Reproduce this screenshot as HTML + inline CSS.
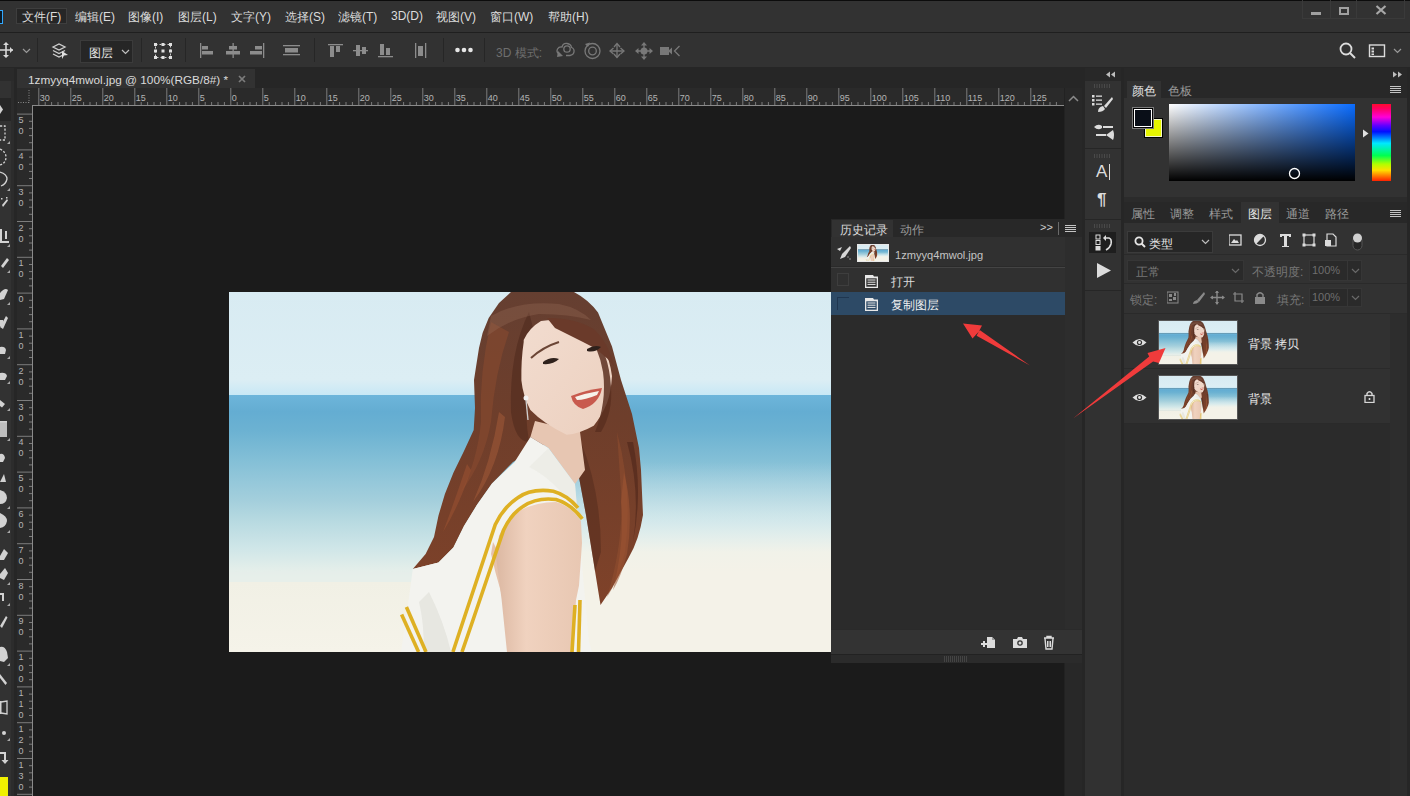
<!DOCTYPE html>
<html><head><meta charset="utf-8">
<style>
*{margin:0;padding:0;box-sizing:border-box}
html,body{width:1410px;height:796px;overflow:hidden;background:#282828;font-family:"Liberation Sans",sans-serif;color:#d6d6d6}
.a{position:absolute}
.t{position:absolute;white-space:nowrap;line-height:1}
svg{display:block;position:absolute}
i{font-style:normal;display:inline-block}
</style></head><body>
<svg width="0" height="0" style="position:absolute">
<symbol id="photo" viewBox="0 0 648 360" preserveAspectRatio="none">
 <defs>
  <linearGradient id="sky" x1="0" y1="0" x2="0" y2="1">
   <stop offset="0" stop-color="#d8ebf2"/>
   <stop offset="0.85" stop-color="#dceef4"/>
   <stop offset="1" stop-color="#c8e8f5"/>
  </linearGradient>
  <linearGradient id="sea" x1="0" y1="0" x2="0" y2="1">
   <stop offset="0" stop-color="#6db5da"/>
   <stop offset="0.09" stop-color="#64add2"/>
   <stop offset="0.19" stop-color="#6cb2d2"/>
   <stop offset="0.33" stop-color="#81bed6"/>
   <stop offset="0.46" stop-color="#95c8da"/>
   <stop offset="0.56" stop-color="#a4cfdc"/>
   <stop offset="0.67" stop-color="#b8dae1"/>
   <stop offset="0.81" stop-color="#cfe6e8"/>
   <stop offset="0.92" stop-color="#e3eeea"/>
   <stop offset="1" stop-color="#eef2ea"/>
  </linearGradient>
  <linearGradient id="sand" x1="0" y1="0" x2="0" y2="1">
   <stop offset="0" stop-color="#f1f0e5"/>
   <stop offset="1" stop-color="#f5f3e9"/>
  </linearGradient>
  <linearGradient id="hairg" x1="0" y1="0" x2="0" y2="1">
   <stop offset="0" stop-color="#653f31"/>
   <stop offset="0.4" stop-color="#6e3e2b"/>
   <stop offset="1" stop-color="#7f4229"/>
  </linearGradient>
  <linearGradient id="armg" x1="0" y1="0" x2="1" y2="0">
   <stop offset="0" stop-color="#dcb8a2"/>
   <stop offset="0.35" stop-color="#f0d2bf"/>
   <stop offset="1" stop-color="#e8c7b2"/>
  </linearGradient>
  <linearGradient id="faceg" x1="0" y1="0" x2="1" y2="1">
   <stop offset="0" stop-color="#f2dccf"/>
   <stop offset="1" stop-color="#ecd0bf"/>
  </linearGradient>
 </defs>
 <rect x="0" y="0" width="648" height="103" fill="url(#sky)"/>
 <rect x="0" y="103" width="648" height="189" fill="url(#sea)"/>
 <rect x="0" y="290" width="648" height="70" fill="url(#sand)"/>
 <path d="M0 280 Q120 276 240 282 L240 290 L0 290Z" fill="#e6eeea" opacity="0.7"/>
 <linearGradient id="beachR" gradientUnits="userSpaceOnUse" x1="0" y1="170" x2="0" y2="280"><stop offset="0" stop-color="#d6ebf0" stop-opacity="0"/><stop offset="0.55" stop-color="#e0eff0" stop-opacity="0.7"/><stop offset="0.82" stop-color="#f1f2e9"/><stop offset="1" stop-color="#f4f2e8"/></linearGradient>
 <rect x="300" y="170" width="348" height="190" fill="url(#beachR)"/>
 <!-- hair -->
 <path fill="url(#hairg)" d="M282 0 L345 0 Q360 8 369 20.6 L383 54.5 L392 88 L403 122 L410 156 L412 178 L414 223 Q410 248 400 265 L383 296 L371.5 313 L366 279 L357 223 L349 180 L345 160 L320 150 L284 170 L263 191.4 L248 212.8 L235 234 L224.4 255.5 L209.5 270.5 L183.8 277 L196.6 262 L205 245 L209.5 223.5 L215.9 202 L224.4 180.7 L235 159 L244.7 138 L246 116 L245 88 L247 75 L250 56 L253.6 41 L259.7 26 L270 11 L282 0Z"/>
 <!-- hair highlights / shadows -->
 <path fill="#8a4a30" opacity="0.55" d="M262 30 Q250 80 252 130 Q248 170 232 200 Q255 170 262 130 Q266 80 280 40Z"/>
 <path fill="#4a2619" opacity="0.5" d="M300 20 Q280 60 282 120 Q286 150 300 150 Q292 100 305 40Z"/>
 <path fill="#93502f" opacity="0.5" d="M388 140 Q404 200 396 260 Q388 290 378 305 Q395 250 392 200Z"/>
 <path fill="#4d271b" opacity="0.45" d="M352 150 Q372 200 372 260 L366 279 L357 223 L349 180Z"/>
 <g opacity="0.55">
  <path fill="#9c5232" d="M238 172 Q226 208 214 240 Q230 214 242 178Z"/>
  <path fill="#a05634" d="M395 180 Q405 220 398 262 Q392 285 384 298 Q396 250 392 210Z"/>
  <path fill="#4a2318" d="M404 150 Q414 200 404 250 Q412 200 398 150Z"/>
  <path fill="#a25a38" d="M270 120 Q262 170 244 210 Q270 175 276 125Z"/>
 </g>
 <path fill="#9a705e" opacity="0.3" d="M262 24 Q290 8 330 12 Q350 16 362 28 Q340 22 310 22 Q282 26 258 44Z"/>
 <!-- neck -->
 <path fill="#e7c6b2" d="M306 129 L351 140 L356 178 L346 192 L319.5 156 L301.4 145Z"/>
 <!-- face -->
 <path fill="url(#faceg)" d="M294.7 48 Q300 36 312 29 Q332 26 352 32 Q366 40 373.8 54.5 Q381 68 383 84 Q382 100 378 111 Q372 125 364.7 133.7 Q350 142 337.6 142.7 Q315 132 301.4 118 Q294 104 292.4 88.4 Q292 68 294.7 50Z"/>
 <!-- strands over face -->
 <path fill="#5a2f20" opacity="0.85" d="M362 38 Q380 60 382 95 Q384 120 372 140 L366 140 Q378 110 374 80 Q370 55 356 40Z"/>
 <path fill="#6a3a2a" d="M318 26 Q348 26 366 38 Q380 52 385 74 Q372 58 354 50 Q338 42 326 36Z"/>
 <path d="M302 66 Q314 55 330 50" stroke="#6b4535" stroke-width="2" fill="none"/>
 <!-- eyes / nose / lips -->
 <path d="M314 70 Q322 64 330 67 Q324 73 314 72Z" fill="#2f211c"/>
 <path d="M358 57 Q366 52 372 55 Q366 61 358 59Z" fill="#2f211c"/>
 <path d="M342 104 Q357 98 373 96 Q370 112 354 117 Q344 114 342 104Z" fill="#c85a4e"/>
 <path d="M346 105 Q358 101 370 99 L368 103 Q356 108 348 108Z" fill="#f6f1ea"/>
 <circle cx="297" cy="106" r="2.5" fill="#f2f2f2"/>
 <path d="M297 108 L299 128" stroke="#cfcfcf" stroke-width="1.3"/>
 <!-- dress -->
 <path fill="#f3f3ef" d="M285.6 170 L301.4 145 L319.5 156 L346 192 L351 251 L360 350 L363 360 L172 360 L178 320 L183.8 277 L209.5 270.5 L224.4 255.5 L235 234 L248 212.8 L263 191.4Z"/>
 <path fill="#dddcd5" opacity="0.55" d="M200 300 Q215 330 222 360 L195 360 Q195 330 190 310Z"/>
 <path fill="#e2e1da" opacity="0.35" d="M319.5 156 L346 192 L349 225 Q330 190 300 175Z"/>
 <!-- torso skin in armhole -->
 <path fill="#e5c2ab" d="M264 250 Q270 262 281 282 L272 300 Q266 280 262 262Z"/>
 <!-- arm -->
 <path fill="url(#armg)" d="M270 244 Q278 226 292 218 Q308 210 327 210 Q342 214 352 229 L353 251 L350 293.5 L347 308 L344 360 L278 360 L272.6 307.6 L267 265Z"/>
 <!-- yellow stripes -->
 <g fill="none" stroke="#deb023" stroke-width="3.6">
  <path d="M353.3 226.8 Q342 212 327 207.5 Q308 205 294 214.4 Q282 222 274.6 238 L244 328 L233 360"/>
  <path d="M349 215.8 Q338 203 324.3 199.2 Q302 196 288.4 206 Q274 216 266.3 232.4 L234.5 328 L223.9 360"/>
  <path d="M172.6 322.6 L189.6 360"/>
  <path d="M177.4 315 L197 360"/>
  <path d="M346 313 L343 360"/>
  <path d="M351 308 L349.5 360"/>
 </g>
</symbol>
</svg>

<div class="a" style="left:0px;top:0px;width:1410px;height:32px;background:#323232;"></div>
<div class="a" style="left:0px;top:0px;width:1410px;height:1px;background:#0c0c0c;"></div>
<div class="a" style="left:0px;top:32px;width:1410px;height:1px;background:#1f1f1f;"></div>
<div class="a" style="left:0px;top:10px;width:3px;height:14px;background:#0b1a26;border:1px solid #31a8ff;border-left:none"></div>
<div class="a" style="left:16px;top:8px;width:51px;height:16px;background:#262626;border:1px solid #3e3e3e"></div>
<span class="t" style="left:22px;top:11px;font-size:12px;color:#dcdcdc;"><i style="width:24.0px">文件</i>(F)</span>
<span class="t" style="left:75px;top:11px;font-size:12px;color:#dcdcdc;"><i style="width:24.0px">编辑</i>(E)</span>
<span class="t" style="left:128px;top:11px;font-size:12px;color:#dcdcdc;"><i style="width:24.0px">图像</i>(I)</span>
<span class="t" style="left:178px;top:11px;font-size:12px;color:#dcdcdc;"><i style="width:24.0px">图层</i>(L)</span>
<span class="t" style="left:231px;top:11px;font-size:12px;color:#dcdcdc;"><i style="width:24.0px">文字</i>(Y)</span>
<span class="t" style="left:285px;top:11px;font-size:12px;color:#dcdcdc;"><i style="width:24.0px">选择</i>(S)</span>
<span class="t" style="left:338px;top:11px;font-size:12px;color:#dcdcdc;"><i style="width:24.0px">滤镜</i>(T)</span>
<span class="t" style="left:391px;top:10px;font-size:12px;color:#dcdcdc;">3D(D)</span>
<span class="t" style="left:436px;top:11px;font-size:12px;color:#dcdcdc;"><i style="width:24.0px">视图</i>(V)</span>
<span class="t" style="left:490px;top:11px;font-size:12px;color:#dcdcdc;"><i style="width:24.0px">窗口</i>(W)</span>
<span class="t" style="left:548px;top:11px;font-size:12px;color:#dcdcdc;"><i style="width:24.0px">帮助</i>(H)</span>
<div class="a" style="left:1302px;top:0px;width:1px;height:19px;background:#3a3a3a;"></div>
<div class="a" style="left:1330px;top:0px;width:1px;height:19px;background:#3a3a3a;"></div>
<div class="a" style="left:1356px;top:0px;width:1px;height:19px;background:#3a3a3a;"></div>
<div class="a" style="left:1404px;top:0px;width:1px;height:19px;background:#3a3a3a;"></div>
<div class="a" style="left:1302px;top:18px;width:103px;height:1px;background:#3a3a3a;"></div>
<div class="a" style="left:1311px;top:12px;width:10px;height:3px;background:#a0a0a0;"></div>
<div class="a" style="left:1339px;top:7px;width:10px;height:8px;background:transparent;border:2px solid #a0a0a0;border-top-width:2.5px"></div>
<svg style="left:1375px;top:5px" width="12" height="10"><path d="M1.5 1L10.5 9M10.5 1L1.5 9" stroke="#a8a8a8" stroke-width="2.2"/></svg>
<div class="a" style="left:0px;top:33px;width:1410px;height:35px;background:#323232;"></div>
<svg style="left:0;top:42px" width="14" height="16"><path d="M6 1V15M0 8H13" stroke="#d8d8d8" stroke-width="1.6"/><path d="M6 0L3 3H9ZM6 16L3 13H9ZM13 8L10 5V11Z" fill="#d8d8d8"/></svg>
<svg style="left:22px;top:48px" width="9" height="6"><path d="M1 1L4.5 4.5L8 1" stroke="#9a9a9a" stroke-width="1.2" fill="none"/></svg>
<div class="a" style="left:37px;top:38px;width:1px;height:24px;background:#262626;"></div>
<div class="a" style="left:141px;top:38px;width:1px;height:24px;background:#262626;"></div>
<div class="a" style="left:185px;top:38px;width:1px;height:24px;background:#262626;"></div>
<div class="a" style="left:314px;top:38px;width:1px;height:24px;background:#262626;"></div>
<div class="a" style="left:443px;top:38px;width:1px;height:24px;background:#262626;"></div>
<svg style="left:51px;top:42px" width="18" height="18"><g fill="none" stroke="#cfcfcf" stroke-width="1.3"><path d="M2 5L8 2L14 5L8 8Z"/><path d="M2 8.5L8 11.5L14 8.5"/><path d="M2 12L8 15L12 13"/></g><path d="M11 9L17 13L13 13.5L11 17Z" fill="#e0e0e0"/></svg>
<div class="a" style="left:80px;top:40px;width:53px;height:23px;background:#262626;border:1px solid #3b3b3b"></div>
<span class="t" style="left:89px;top:47px;font-size:12px;color:#e6e6e6;"><i style="width:24.0px">图层</i></span>
<svg style="left:121px;top:49px" width="9" height="6"><path d="M1 1L4.5 4.5L8 1" stroke="#c0c0c0" stroke-width="1.2" fill="none"/></svg>
<svg style="left:154px;top:43px" width="18" height="16"><rect x="1.5" y="1.5" width="15" height="13" fill="none" stroke="#cfcfcf" stroke-width="1" stroke-dasharray="2 2"/><g fill="#e0e0e0"><rect x="0" y="0" width="3" height="3"/><rect x="15" y="0" width="3" height="3"/><rect x="0" y="13" width="3" height="3"/><rect x="15" y="13" width="3" height="3"/><rect x="7.5" y="0" width="3" height="3"/><rect x="7.5" y="13" width="3" height="3"/><rect x="0" y="6.5" width="3" height="3"/><rect x="15" y="6.5" width="3" height="3"/><rect x="7.5" y="6.5" width="3" height="3"/></g></svg>
<svg style="left:199px;top:42px" width="232" height="17"><g fill="#8c8c8c"><rect x="1" y="1" width="1.3" height="15"/><rect x="3" y="4" width="6" height="3.5"/><rect x="3" y="9" width="11" height="3.5"/><rect x="33.5" y="1" width="1.3" height="15"/><rect x="30" y="4" width="8" height="3.5"/><rect x="27" y="9" width="14" height="3.5"/><rect x="64" y="1" width="1.3" height="15"/><rect x="56" y="4" width="7" height="3.5"/><rect x="51" y="9" width="12" height="3.5"/><rect x="84" y="3" width="17" height="1.3"/><rect x="86" y="6" width="13" height="4.5"/><rect x="84" y="12" width="17" height="1.3"/><rect x="129" y="2" width="15" height="1.3"/><rect x="131" y="4" width="4" height="11"/><rect x="137" y="4" width="4" height="6"/><rect x="154" y="8" width="15" height="1.3"/><rect x="157" y="3" width="4" height="11"/><rect x="163" y="5" width="4" height="7"/><rect x="179" y="14" width="15" height="1.3"/><rect x="181" y="2" width="4" height="11"/><rect x="187" y="6" width="4" height="7"/><rect x="216" y="1" width="1.3" height="15"/><rect x="219" y="4" width="5" height="10"/><rect x="226" y="1" width="1.3" height="15"/></g></svg>
<svg style="left:455px;top:47px" width="18" height="6"><g fill="#e6e6e6"><circle cx="2.5" cy="3" r="2.3"/><circle cx="9" cy="3" r="2.3"/><circle cx="15.5" cy="3" r="2.3"/></g></svg>
<span class="t" style="left:496px;top:47px;font-size:12px;color:#6e6e6e;">3D <i style="width:24.0px">模式</i>:</span>
<svg style="left:555px;top:41px" width="128" height="19"><g fill="none" stroke="#787878" stroke-width="1.3"><path d="M4 13Q1 11 2.5 8Q4 5.5 7 6Q8 2 12 2.5Q16 3 16.5 6.5Q19.5 7.5 19 11Q18.5 14 15 14.5H11"/><circle cx="12" cy="8" r="3.2"/><circle cx="37.5" cy="10" r="7.5"/><circle cx="37.5" cy="10" r="3.8"/><path d="M62 3.5V16.5M55.5 10H68.5"/><path d="M59 6L62 2.5L65 6M59 13L62 16.5L65 13M58.5 7L55 10L58.5 13M65.5 7L69 10L65.5 13" /><path d="M83 10H95M89 4V16"/><path d="M124.5 5L119.5 10L124.5 15"/></g><g fill="#787878"><path d="M3 10L8 15L2 16Z"/><path d="M30 3L35 1.5L33 6Z"/><circle cx="89" cy="10" r="3.5"/><path d="M89 1L86 4.5H92ZM89 19L86 15.5H92ZM80 10L83.5 7V13ZM98 10L94.5 7V13Z"/><rect x="105" y="6" width="9" height="8"/><path d="M113 10L117 6.5V13.5Z"/></g></svg>
<div class="a" style="left:484px;top:38px;width:1px;height:24px;background:#262626"></div>
<svg style="left:1339px;top:42px" width="17" height="17"><circle cx="7" cy="7" r="5.5" fill="none" stroke="#dcdcdc" stroke-width="1.8"/><path d="M11 11L16 16" stroke="#dcdcdc" stroke-width="2"/></svg>
<svg style="left:1368px;top:43px" width="18" height="15"><rect x="1.5" y="2" width="15" height="11.5" fill="none" stroke="#dcdcdc" stroke-width="1.4"/><rect x="3.5" y="4.5" width="2.5" height="2" fill="#dcdcdc"/><rect x="3.5" y="7.5" width="2.5" height="2" fill="#dcdcdc"/><rect x="3.5" y="10.5" width="2.5" height="1.5" fill="#dcdcdc"/></svg>
<svg style="left:1393px;top:48px" width="9" height="6"><path d="M1 1L4.5 4.5L8 1" stroke="#9a9a9a" stroke-width="1.2" fill="none"/></svg>
<div class="a" style="left:0px;top:67px;width:1410px;height:1px;background:#262626;"></div>
<div class="a" style="left:0px;top:68px;width:14px;height:728px;background:#323232;"></div>
<div class="a" style="left:0px;top:68px;width:14px;height:13px;background:#2a2a2a;"></div>
<div class="a" style="left:11px;top:81px;width:3px;height:715px;background:#2c2c2c;"></div>
<div class="a" style="left:14px;top:68px;width:3px;height:728px;background:#262626;"></div>
<div class="a" style="left:0px;top:98px;width:11px;height:23px;background:#262626;"></div>
<svg style="left:0;top:0" width="11" height="796"><g fill="#d2d2d2">
<path d="M0 105L3 109.5L0 114Z"/>
</g><g fill="none" stroke="#d2d2d2" stroke-width="1.3">
<path d="M0 126H5V140H0" stroke-dasharray="2.2 1.6"/>
<path d="M0 149Q6 152 6 157Q6 163 0 165" stroke-dasharray="2.2 1.6"/>
<path d="M0 172Q7 174 7 179Q6 184 1 186"/>
</g><g fill="#d2d2d2">
<path d="M2 205L7 199L8 200.5L3 207Z"/><rect x="6" y="197" width="1.5" height="1.5"/><rect x="1" y="198" width="1.5" height="1.5"/>
<path d="M0 229H2V241H9V243H0Z"/><path d="M5 231H7V239H5Z"/>
<path d="M1 266L7 258L9 260L3 268Z"/>
<path d="M0 293Q5 287 8 290L4 299L0 300Z"/>
<path d="M0 327L6 316L8 318L3 329Z"/>
<path d="M0 320H3V326H0Z"/>
<path d="M0 347Q5 346 6 350L5 354H0Z"/>
<path d="M0 373Q6 372 7 376L5 380H0Z"/>
<path d="M0 400L5 404L2 407.5L0 406Z"/>
<rect x="0" y="421" width="7" height="16" fill="#bdbdbd"/><rect x="0" y="421" width="7" height="1.5"/>
<path d="M0 454Q4 453 5 458L3 462H0Z"/>
<path d="M0 482L4 474L6 482Z"/>
<path d="M0 490Q7 492 7 498Q6 504 0 504Z"/>
<path d="M0 513Q7 516 7 521Q6 527 0 528Z"/>
<path d="M0 556L4 549L8 553L4 560L0 560Z"/>
<path d="M0 574L5 568L8 573L4 580L0 578Z"/>
<path d="M0 593H4V601H2V595H0Z"/>
<path d="M0 626L6 616L7.5 617.5L2 628Z"/>
<path d="M0 647Q5 646 7 652L8 658L4 662L0 661Z"/>
<path d="M0 674L7 683L5.5 685L0 678Z"/>
<rect x="0" y="701" width="1.5" height="13"/><path d="M1 702L7 701V714L1 713" fill="none" stroke="#d2d2d2" stroke-width="1.3"/>
<circle cx="4" cy="733" r="2"/>
<path d="M0 752H6V760H8.5L5 764L1.5 760H4V754H0Z"/>
</g>
<g fill="#a8a8a8"><path d="M10 141L7 144H10Z"/><path d="M10 188L7 191H10Z"/><path d="M10 244L7 247H10Z"/><path d="M10 270L7 273H10Z"/><path d="M10 302L7 305H10Z"/><path d="M10 356L7 359H10Z"/><path d="M10 381L7 384H10Z"/><path d="M10 408L7 411H10Z"/><path d="M10 438L7 441H10Z"/><path d="M10 506L7 509H10Z"/><path d="M10 530L7 533H10Z"/><path d="M10 582L7 585H10Z"/><path d="M10 603L7 606H10Z"/><path d="M10 663L7 666H10Z"/><path d="M10 738L7 741H10Z"/></g>
</svg>
<div class="a" style="left:0px;top:777px;width:8px;height:19px;background:#f0f000;"></div>
<div class="a" style="left:17px;top:68px;width:1068px;height:20px;background:#262626;"></div>
<div class="a" style="left:17px;top:69px;width:238px;height:19px;background:#323232;"></div>
<span class="t" style="left:28px;top:75px;font-size:11.8px;color:#dadada;">1zmyyq4mwol.jpg @ 100%(RGB/8#) *</span>
<svg style="left:238px;top:75px" width="8" height="8"><path d="M1 1L7 7M7 1L1 7" stroke="#7c7c7c" stroke-width="1.7"/></svg>
<div class="a" style="left:17px;top:88px;width:1048px;height:18px;background:#2a2a2a;"></div>
<div class="a" style="left:17px;top:105px;width:16px;height:691px;background:#2a2a2a;"></div>
<div class="a" style="left:33px;top:106px;width:1032px;height:690px;background:#1b1b1b;"></div>
<svg style="left:17px;top:88px" width="16" height="17"><path d="M12 2V15M1 14.5H12" stroke="#8a8a8a" stroke-width="1" stroke-dasharray="1 1.5"/></svg>
<svg style="left:33px;top:88px" width="1032" height="18"><g fill="#7c7c7c"><rect x="5.3" y="0" width="1" height="18"/><rect x="11.7" y="14" width="1" height="4"/><rect x="18.1" y="14" width="1" height="4"/><rect x="24.5" y="14" width="1" height="4"/><rect x="30.9" y="14" width="1" height="4"/><rect x="37.3" y="0" width="1" height="18"/><rect x="43.7" y="14" width="1" height="4"/><rect x="50.1" y="14" width="1" height="4"/><rect x="56.5" y="14" width="1" height="4"/><rect x="62.9" y="14" width="1" height="4"/><rect x="69.3" y="0" width="1" height="18"/><rect x="75.7" y="14" width="1" height="4"/><rect x="82.1" y="14" width="1" height="4"/><rect x="88.5" y="14" width="1" height="4"/><rect x="94.9" y="14" width="1" height="4"/><rect x="101.3" y="0" width="1" height="18"/><rect x="107.7" y="14" width="1" height="4"/><rect x="114.1" y="14" width="1" height="4"/><rect x="120.5" y="14" width="1" height="4"/><rect x="126.9" y="14" width="1" height="4"/><rect x="133.3" y="0" width="1" height="18"/><rect x="139.7" y="14" width="1" height="4"/><rect x="146.1" y="14" width="1" height="4"/><rect x="152.5" y="14" width="1" height="4"/><rect x="158.9" y="14" width="1" height="4"/><rect x="165.3" y="0" width="1" height="18"/><rect x="171.7" y="14" width="1" height="4"/><rect x="178.1" y="14" width="1" height="4"/><rect x="184.5" y="14" width="1" height="4"/><rect x="190.9" y="14" width="1" height="4"/><rect x="197.3" y="0" width="1" height="18"/><rect x="203.7" y="14" width="1" height="4"/><rect x="210.1" y="14" width="1" height="4"/><rect x="216.5" y="14" width="1" height="4"/><rect x="222.9" y="14" width="1" height="4"/><rect x="229.3" y="0" width="1" height="18"/><rect x="235.7" y="14" width="1" height="4"/><rect x="242.1" y="14" width="1" height="4"/><rect x="248.5" y="14" width="1" height="4"/><rect x="254.9" y="14" width="1" height="4"/><rect x="261.3" y="0" width="1" height="18"/><rect x="267.7" y="14" width="1" height="4"/><rect x="274.1" y="14" width="1" height="4"/><rect x="280.5" y="14" width="1" height="4"/><rect x="286.9" y="14" width="1" height="4"/><rect x="293.3" y="0" width="1" height="18"/><rect x="299.7" y="14" width="1" height="4"/><rect x="306.1" y="14" width="1" height="4"/><rect x="312.5" y="14" width="1" height="4"/><rect x="318.9" y="14" width="1" height="4"/><rect x="325.3" y="0" width="1" height="18"/><rect x="331.7" y="14" width="1" height="4"/><rect x="338.1" y="14" width="1" height="4"/><rect x="344.5" y="14" width="1" height="4"/><rect x="350.9" y="14" width="1" height="4"/><rect x="357.3" y="0" width="1" height="18"/><rect x="363.7" y="14" width="1" height="4"/><rect x="370.1" y="14" width="1" height="4"/><rect x="376.5" y="14" width="1" height="4"/><rect x="382.9" y="14" width="1" height="4"/><rect x="389.3" y="0" width="1" height="18"/><rect x="395.7" y="14" width="1" height="4"/><rect x="402.1" y="14" width="1" height="4"/><rect x="408.5" y="14" width="1" height="4"/><rect x="414.9" y="14" width="1" height="4"/><rect x="421.3" y="0" width="1" height="18"/><rect x="427.7" y="14" width="1" height="4"/><rect x="434.1" y="14" width="1" height="4"/><rect x="440.5" y="14" width="1" height="4"/><rect x="446.9" y="14" width="1" height="4"/><rect x="453.3" y="0" width="1" height="18"/><rect x="459.7" y="14" width="1" height="4"/><rect x="466.1" y="14" width="1" height="4"/><rect x="472.5" y="14" width="1" height="4"/><rect x="478.9" y="14" width="1" height="4"/><rect x="485.3" y="0" width="1" height="18"/><rect x="491.7" y="14" width="1" height="4"/><rect x="498.1" y="14" width="1" height="4"/><rect x="504.5" y="14" width="1" height="4"/><rect x="510.9" y="14" width="1" height="4"/><rect x="517.3" y="0" width="1" height="18"/><rect x="523.7" y="14" width="1" height="4"/><rect x="530.1" y="14" width="1" height="4"/><rect x="536.5" y="14" width="1" height="4"/><rect x="542.9" y="14" width="1" height="4"/><rect x="549.3" y="0" width="1" height="18"/><rect x="555.7" y="14" width="1" height="4"/><rect x="562.1" y="14" width="1" height="4"/><rect x="568.5" y="14" width="1" height="4"/><rect x="574.9" y="14" width="1" height="4"/><rect x="581.3" y="0" width="1" height="18"/><rect x="587.7" y="14" width="1" height="4"/><rect x="594.1" y="14" width="1" height="4"/><rect x="600.5" y="14" width="1" height="4"/><rect x="606.9" y="14" width="1" height="4"/><rect x="613.3" y="0" width="1" height="18"/><rect x="619.7" y="14" width="1" height="4"/><rect x="626.1" y="14" width="1" height="4"/><rect x="632.5" y="14" width="1" height="4"/><rect x="638.9" y="14" width="1" height="4"/><rect x="645.3" y="0" width="1" height="18"/><rect x="651.7" y="14" width="1" height="4"/><rect x="658.1" y="14" width="1" height="4"/><rect x="664.5" y="14" width="1" height="4"/><rect x="670.9" y="14" width="1" height="4"/><rect x="677.3" y="0" width="1" height="18"/><rect x="683.7" y="14" width="1" height="4"/><rect x="690.1" y="14" width="1" height="4"/><rect x="696.5" y="14" width="1" height="4"/><rect x="702.9" y="14" width="1" height="4"/><rect x="709.3" y="0" width="1" height="18"/><rect x="715.7" y="14" width="1" height="4"/><rect x="722.1" y="14" width="1" height="4"/><rect x="728.5" y="14" width="1" height="4"/><rect x="734.9" y="14" width="1" height="4"/><rect x="741.3" y="0" width="1" height="18"/><rect x="747.7" y="14" width="1" height="4"/><rect x="754.1" y="14" width="1" height="4"/><rect x="760.5" y="14" width="1" height="4"/><rect x="766.9" y="14" width="1" height="4"/><rect x="773.3" y="0" width="1" height="18"/><rect x="779.7" y="14" width="1" height="4"/><rect x="786.1" y="14" width="1" height="4"/><rect x="792.5" y="14" width="1" height="4"/><rect x="798.9" y="14" width="1" height="4"/><rect x="805.3" y="0" width="1" height="18"/><rect x="811.7" y="14" width="1" height="4"/><rect x="818.1" y="14" width="1" height="4"/><rect x="824.5" y="14" width="1" height="4"/><rect x="830.9" y="14" width="1" height="4"/><rect x="837.3" y="0" width="1" height="18"/><rect x="843.7" y="14" width="1" height="4"/><rect x="850.1" y="14" width="1" height="4"/><rect x="856.5" y="14" width="1" height="4"/><rect x="862.9" y="14" width="1" height="4"/><rect x="869.3" y="0" width="1" height="18"/><rect x="875.7" y="14" width="1" height="4"/><rect x="882.1" y="14" width="1" height="4"/><rect x="888.5" y="14" width="1" height="4"/><rect x="894.9" y="14" width="1" height="4"/><rect x="901.3" y="0" width="1" height="18"/><rect x="907.7" y="14" width="1" height="4"/><rect x="914.1" y="14" width="1" height="4"/><rect x="920.5" y="14" width="1" height="4"/><rect x="926.9" y="14" width="1" height="4"/><rect x="933.3" y="0" width="1" height="18"/><rect x="939.7" y="14" width="1" height="4"/><rect x="946.1" y="14" width="1" height="4"/><rect x="952.5" y="14" width="1" height="4"/><rect x="958.9" y="14" width="1" height="4"/><rect x="965.3" y="0" width="1" height="18"/><rect x="971.7" y="14" width="1" height="4"/><rect x="978.1" y="14" width="1" height="4"/><rect x="984.5" y="14" width="1" height="4"/><rect x="990.9" y="14" width="1" height="4"/><rect x="997.3" y="0" width="1" height="18"/><rect x="1003.7" y="14" width="1" height="4"/><rect x="1010.1" y="14" width="1" height="4"/><rect x="1016.5" y="14" width="1" height="4"/><rect x="1022.9" y="14" width="1" height="4"/></g><rect x="0" y="17" width="1032" height="1" fill="#8a8a8a"/></svg>
<span class="t" style="left:39.8px;top:94px;font-size:9px;color:#b4b4b4;">30</span>
<span class="t" style="left:71.8px;top:94px;font-size:9px;color:#b4b4b4;">25</span>
<span class="t" style="left:103.8px;top:94px;font-size:9px;color:#b4b4b4;">20</span>
<span class="t" style="left:135.8px;top:94px;font-size:9px;color:#b4b4b4;">15</span>
<span class="t" style="left:167.8px;top:94px;font-size:9px;color:#b4b4b4;">10</span>
<span class="t" style="left:199.8px;top:94px;font-size:9px;color:#b4b4b4;">5</span>
<span class="t" style="left:231.8px;top:94px;font-size:9px;color:#b4b4b4;">0</span>
<span class="t" style="left:263.8px;top:94px;font-size:9px;color:#b4b4b4;">5</span>
<span class="t" style="left:295.8px;top:94px;font-size:9px;color:#b4b4b4;">10</span>
<span class="t" style="left:327.8px;top:94px;font-size:9px;color:#b4b4b4;">15</span>
<span class="t" style="left:359.8px;top:94px;font-size:9px;color:#b4b4b4;">20</span>
<span class="t" style="left:391.8px;top:94px;font-size:9px;color:#b4b4b4;">25</span>
<span class="t" style="left:423.8px;top:94px;font-size:9px;color:#b4b4b4;">30</span>
<span class="t" style="left:455.8px;top:94px;font-size:9px;color:#b4b4b4;">35</span>
<span class="t" style="left:487.8px;top:94px;font-size:9px;color:#b4b4b4;">40</span>
<span class="t" style="left:519.8px;top:94px;font-size:9px;color:#b4b4b4;">45</span>
<span class="t" style="left:551.8px;top:94px;font-size:9px;color:#b4b4b4;">50</span>
<span class="t" style="left:583.8px;top:94px;font-size:9px;color:#b4b4b4;">55</span>
<span class="t" style="left:615.8px;top:94px;font-size:9px;color:#b4b4b4;">60</span>
<span class="t" style="left:647.8px;top:94px;font-size:9px;color:#b4b4b4;">65</span>
<span class="t" style="left:679.8px;top:94px;font-size:9px;color:#b4b4b4;">70</span>
<span class="t" style="left:711.8px;top:94px;font-size:9px;color:#b4b4b4;">75</span>
<span class="t" style="left:743.8px;top:94px;font-size:9px;color:#b4b4b4;">80</span>
<span class="t" style="left:775.8px;top:94px;font-size:9px;color:#b4b4b4;">85</span>
<span class="t" style="left:807.8px;top:94px;font-size:9px;color:#b4b4b4;">90</span>
<span class="t" style="left:839.8px;top:94px;font-size:9px;color:#b4b4b4;">95</span>
<span class="t" style="left:871.8px;top:94px;font-size:9px;color:#b4b4b4;">100</span>
<span class="t" style="left:903.8px;top:94px;font-size:9px;color:#b4b4b4;">105</span>
<span class="t" style="left:935.8px;top:94px;font-size:9px;color:#b4b4b4;">110</span>
<span class="t" style="left:967.8px;top:94px;font-size:9px;color:#b4b4b4;">115</span>
<span class="t" style="left:999.8px;top:94px;font-size:9px;color:#b4b4b4;">120</span>
<span class="t" style="left:1031.8px;top:94px;font-size:9px;color:#b4b4b4;">125</span>
<svg style="left:17px;top:105px" width="16" height="691"><g fill="#7c7c7c"><rect x="0" y="8.6" width="16" height="1"/><rect x="12" y="15.8" width="4" height="1"/><rect x="12" y="22.9" width="4" height="1"/><rect x="12" y="30.1" width="4" height="1"/><rect x="12" y="37.2" width="4" height="1"/><rect x="0" y="44.4" width="16" height="1"/><rect x="12" y="51.6" width="4" height="1"/><rect x="12" y="58.7" width="4" height="1"/><rect x="12" y="65.9" width="4" height="1"/><rect x="12" y="73.0" width="4" height="1"/><rect x="0" y="80.2" width="16" height="1"/><rect x="12" y="87.4" width="4" height="1"/><rect x="12" y="94.5" width="4" height="1"/><rect x="12" y="101.7" width="4" height="1"/><rect x="12" y="108.8" width="4" height="1"/><rect x="0" y="116.0" width="16" height="1"/><rect x="12" y="123.2" width="4" height="1"/><rect x="12" y="130.3" width="4" height="1"/><rect x="12" y="137.5" width="4" height="1"/><rect x="12" y="144.6" width="4" height="1"/><rect x="0" y="151.8" width="16" height="1"/><rect x="12" y="159.0" width="4" height="1"/><rect x="12" y="166.1" width="4" height="1"/><rect x="12" y="173.3" width="4" height="1"/><rect x="12" y="180.4" width="4" height="1"/><rect x="0" y="187.6" width="16" height="1"/><rect x="12" y="194.8" width="4" height="1"/><rect x="12" y="201.9" width="4" height="1"/><rect x="12" y="209.1" width="4" height="1"/><rect x="12" y="216.2" width="4" height="1"/><rect x="0" y="223.4" width="16" height="1"/><rect x="12" y="230.6" width="4" height="1"/><rect x="12" y="237.7" width="4" height="1"/><rect x="12" y="244.9" width="4" height="1"/><rect x="12" y="252.0" width="4" height="1"/><rect x="0" y="259.2" width="16" height="1"/><rect x="12" y="266.4" width="4" height="1"/><rect x="12" y="273.5" width="4" height="1"/><rect x="12" y="280.7" width="4" height="1"/><rect x="12" y="287.8" width="4" height="1"/><rect x="0" y="295.0" width="16" height="1"/><rect x="12" y="302.2" width="4" height="1"/><rect x="12" y="309.3" width="4" height="1"/><rect x="12" y="316.5" width="4" height="1"/><rect x="12" y="323.6" width="4" height="1"/><rect x="0" y="330.8" width="16" height="1"/><rect x="12" y="338.0" width="4" height="1"/><rect x="12" y="345.1" width="4" height="1"/><rect x="12" y="352.3" width="4" height="1"/><rect x="12" y="359.4" width="4" height="1"/><rect x="0" y="366.6" width="16" height="1"/><rect x="12" y="373.8" width="4" height="1"/><rect x="12" y="380.9" width="4" height="1"/><rect x="12" y="388.1" width="4" height="1"/><rect x="12" y="395.2" width="4" height="1"/><rect x="0" y="402.4" width="16" height="1"/><rect x="12" y="409.6" width="4" height="1"/><rect x="12" y="416.7" width="4" height="1"/><rect x="12" y="423.9" width="4" height="1"/><rect x="12" y="431.0" width="4" height="1"/><rect x="0" y="438.2" width="16" height="1"/><rect x="12" y="445.4" width="4" height="1"/><rect x="12" y="452.5" width="4" height="1"/><rect x="12" y="459.7" width="4" height="1"/><rect x="12" y="466.8" width="4" height="1"/><rect x="0" y="474.0" width="16" height="1"/><rect x="12" y="481.2" width="4" height="1"/><rect x="12" y="488.3" width="4" height="1"/><rect x="12" y="495.5" width="4" height="1"/><rect x="12" y="502.6" width="4" height="1"/><rect x="0" y="509.8" width="16" height="1"/><rect x="12" y="517.0" width="4" height="1"/><rect x="12" y="524.1" width="4" height="1"/><rect x="12" y="531.3" width="4" height="1"/><rect x="12" y="538.4" width="4" height="1"/><rect x="0" y="545.6" width="16" height="1"/><rect x="12" y="552.8" width="4" height="1"/><rect x="12" y="559.9" width="4" height="1"/><rect x="12" y="567.1" width="4" height="1"/><rect x="12" y="574.2" width="4" height="1"/><rect x="0" y="581.4" width="16" height="1"/><rect x="12" y="588.6" width="4" height="1"/><rect x="12" y="595.7" width="4" height="1"/><rect x="12" y="602.9" width="4" height="1"/><rect x="12" y="610.0" width="4" height="1"/><rect x="0" y="617.2" width="16" height="1"/><rect x="12" y="624.4" width="4" height="1"/><rect x="12" y="631.5" width="4" height="1"/><rect x="12" y="638.7" width="4" height="1"/><rect x="12" y="645.8" width="4" height="1"/><rect x="0" y="653.0" width="16" height="1"/><rect x="12" y="660.2" width="4" height="1"/><rect x="12" y="667.3" width="4" height="1"/><rect x="12" y="674.5" width="4" height="1"/><rect x="12" y="681.6" width="4" height="1"/><rect x="0" y="688.8" width="16" height="1"/></g><rect x="15" y="0" width="1" height="691" fill="#8a8a8a"/></svg>
<span class="t" style="left:18.5px;top:116.1px;font-size:9px;color:#b4b4b4;">5</span>
<span class="t" style="left:18.5px;top:127.1px;font-size:9px;color:#b4b4b4;">0</span>
<span class="t" style="left:18.5px;top:151.9px;font-size:9px;color:#b4b4b4;">4</span>
<span class="t" style="left:18.5px;top:162.9px;font-size:9px;color:#b4b4b4;">0</span>
<span class="t" style="left:18.5px;top:187.7px;font-size:9px;color:#b4b4b4;">3</span>
<span class="t" style="left:18.5px;top:198.7px;font-size:9px;color:#b4b4b4;">0</span>
<span class="t" style="left:18.5px;top:223.5px;font-size:9px;color:#b4b4b4;">2</span>
<span class="t" style="left:18.5px;top:234.5px;font-size:9px;color:#b4b4b4;">0</span>
<span class="t" style="left:18.5px;top:259.3px;font-size:9px;color:#b4b4b4;">1</span>
<span class="t" style="left:18.5px;top:270.3px;font-size:9px;color:#b4b4b4;">0</span>
<span class="t" style="left:18.5px;top:295.1px;font-size:9px;color:#b4b4b4;">0</span>
<span class="t" style="left:18.5px;top:330.9px;font-size:9px;color:#b4b4b4;">1</span>
<span class="t" style="left:18.5px;top:341.9px;font-size:9px;color:#b4b4b4;">0</span>
<span class="t" style="left:18.5px;top:366.7px;font-size:9px;color:#b4b4b4;">2</span>
<span class="t" style="left:18.5px;top:377.7px;font-size:9px;color:#b4b4b4;">0</span>
<span class="t" style="left:18.5px;top:402.5px;font-size:9px;color:#b4b4b4;">3</span>
<span class="t" style="left:18.5px;top:413.5px;font-size:9px;color:#b4b4b4;">0</span>
<span class="t" style="left:18.5px;top:438.3px;font-size:9px;color:#b4b4b4;">4</span>
<span class="t" style="left:18.5px;top:449.3px;font-size:9px;color:#b4b4b4;">0</span>
<span class="t" style="left:18.5px;top:474.1px;font-size:9px;color:#b4b4b4;">5</span>
<span class="t" style="left:18.5px;top:485.1px;font-size:9px;color:#b4b4b4;">0</span>
<span class="t" style="left:18.5px;top:509.9px;font-size:9px;color:#b4b4b4;">6</span>
<span class="t" style="left:18.5px;top:520.9px;font-size:9px;color:#b4b4b4;">0</span>
<span class="t" style="left:18.5px;top:545.7px;font-size:9px;color:#b4b4b4;">7</span>
<span class="t" style="left:18.5px;top:556.7px;font-size:9px;color:#b4b4b4;">0</span>
<span class="t" style="left:18.5px;top:581.5px;font-size:9px;color:#b4b4b4;">8</span>
<span class="t" style="left:18.5px;top:592.5px;font-size:9px;color:#b4b4b4;">0</span>
<span class="t" style="left:18.5px;top:617.3px;font-size:9px;color:#b4b4b4;">9</span>
<span class="t" style="left:18.5px;top:628.3px;font-size:9px;color:#b4b4b4;">0</span>
<span class="t" style="left:18.5px;top:653.1px;font-size:9px;color:#b4b4b4;">1</span>
<span class="t" style="left:18.5px;top:664.1px;font-size:9px;color:#b4b4b4;">0</span>
<span class="t" style="left:18.5px;top:675.1px;font-size:9px;color:#b4b4b4;">0</span>
<span class="t" style="left:18.5px;top:688.9px;font-size:9px;color:#b4b4b4;">1</span>
<span class="t" style="left:18.5px;top:699.9px;font-size:9px;color:#b4b4b4;">1</span>
<span class="t" style="left:18.5px;top:710.9px;font-size:9px;color:#b4b4b4;">0</span>
<span class="t" style="left:18.5px;top:724.7px;font-size:9px;color:#b4b4b4;">1</span>
<span class="t" style="left:18.5px;top:735.7px;font-size:9px;color:#b4b4b4;">2</span>
<span class="t" style="left:18.5px;top:746.7px;font-size:9px;color:#b4b4b4;">0</span>
<span class="t" style="left:18.5px;top:760.5px;font-size:9px;color:#b4b4b4;">1</span>
<span class="t" style="left:18.5px;top:771.5px;font-size:9px;color:#b4b4b4;">3</span>
<span class="t" style="left:18.5px;top:782.5px;font-size:9px;color:#b4b4b4;">0</span>
<div class="a" style="left:1065px;top:88px;width:17px;height:708px;background:#282828;"></div>
<div class="a" style="left:1064px;top:88px;width:1px;height:708px;background:#222222;"></div>
<svg style="left:1068px;top:95px" width="11" height="7"><path d="M1 6L5.5 1.5L10 6" stroke="#8a8a8a" stroke-width="1.5" fill="none"/></svg>
<div class="a" style="left:229px;top:292px;width:602px;height:360px;overflow:hidden"><svg style="left:0;top:0" width="648" height="360"><use href="#photo"/></svg></div>
<div class="a" style="left:831px;top:219px;width:251px;height:444px;background:#2b2b2b;"></div>
<div class="a" style="left:831px;top:237px;width:234px;height:30px;background:#303030;"></div>
<div class="a" style="left:831px;top:219px;width:251px;height:18px;background:#282828;"></div>
<div class="a" style="left:832px;top:220px;width:61px;height:17px;background:#323232;"></div>
<span class="t" style="left:840px;top:225px;font-size:11.5px;color:#dcdcdc;"><i style="width:46.0px">历史记录</i></span>
<span class="t" style="left:900px;top:225px;font-size:11.5px;color:#9a9a9a;"><i style="width:23.0px">动作</i></span>
<span class="t" style="left:1040px;top:222px;font-size:11px;color:#cfcfcf;">&gt;&gt;</span>
<div class="a" style="left:1058px;top:222px;width:1px;height:13px;background:#6a6a6a;"></div>
<svg style="left:1065px;top:224px" width="11" height="9"><g fill="#c4c4c4"><rect y="1" width="11" height="1"/><rect y="3" width="11" height="1"/><rect y="5" width="11" height="1"/><rect y="7" width="11" height="1"/></g></svg>
<svg style="left:836px;top:245px" width="16" height="16"><path d="M14 1L6 9L4 14L9 12L15 3Z" fill="#d8d8d8"/><path d="M1 4L6 2L4 6Z" fill="#d8d8d8"/><g fill="#9a9a9a"><circle cx="12" cy="12" r="0.8"/><circle cx="14" cy="14" r="0.8"/></g></svg>
<div class="a" style="left:857px;top:244px;width:32px;height:18px;overflow:hidden;border:1px solid #e8e8e8"><svg style="left:0;top:0" width="30" height="16"><use href="#photo"/></svg></div>
<span class="t" style="left:895px;top:249.5px;font-size:11.1px;color:#c4c4c4;">1zmyyq4mwol.jpg</span>
<div class="a" style="left:831px;top:267px;width:234px;height:1px;background:#444444;"></div>
<div class="a" style="left:831px;top:266px;width:234px;height:1px;background:#2a2a2a;"></div>
<div class="a" style="left:831px;top:268px;width:234px;height:24px;background:#303030;"></div>
<div class="a" style="left:831px;top:292px;width:234px;height:23px;background:#2d4a66;"></div>
<div class="a" style="left:837px;top:273px;width:12px;height:13px;background:transparent;border:1px solid #3e3e3e"></div>
<div class="a" style="left:837px;top:297px;width:12px;height:13px;background:transparent;border:1px solid #1f3650;border-right:none;border-bottom:none"></div>
<svg style="left:864px;top:274px" width="15" height="15"><path d="M1 1H9L10 2.5H14V14H1Z" fill="#e8e8e8"/><path d="M2.3 4.3H12.7V12.7H2.3Z" fill="#303030"/><g fill="#e8e8e8"><rect x="3.5" y="5.5" width="8" height="1"/><rect x="3.5" y="7.7" width="8" height="1"/><rect x="3.5" y="9.9" width="8" height="1"/></g></svg>
<svg style="left:864px;top:297px" width="15" height="15"><path d="M1 1H9L10 2.5H14V14H1Z" fill="#e8e8e8"/><path d="M2.3 4.3H12.7V12.7H2.3Z" fill="#2d4a66"/><g fill="#e8e8e8"><rect x="3.5" y="5.5" width="8" height="1"/><rect x="3.5" y="7.7" width="8" height="1"/><rect x="3.5" y="9.9" width="8" height="1"/></g></svg>
<span class="t" style="left:891px;top:276px;font-size:12px;color:#dcdcdc;"><i style="width:24.0px">打开</i></span>
<span class="t" style="left:891px;top:299px;font-size:12px;color:#f0f0f0;"><i style="width:48.0px">复制图层</i></span>
<div class="a" style="left:1065px;top:237px;width:17px;height:393px;background:#2d2d2d;"></div>
<div class="a" style="left:831px;top:630px;width:251px;height:25px;background:#333333;"></div>
<div class="a" style="left:831px;top:629px;width:251px;height:1px;background:#2a2a2a;"></div>
<div class="a" style="left:831px;top:655px;width:251px;height:8px;background:#2b2b2b;"></div>
<div class="a" style="left:831px;top:654px;width:251px;height:1px;background:#222222;"></div>
<svg style="left:944px;top:656px" width="24" height="6"><g fill="#444"><rect x="0" y="0" width="1" height="6"/><rect x="2" y="0" width="1" height="6"/><rect x="4" y="0" width="1" height="6"/><rect x="6" y="0" width="1" height="6"/><rect x="8" y="0" width="1" height="6"/><rect x="10" y="0" width="1" height="6"/><rect x="12" y="0" width="1" height="6"/><rect x="14" y="0" width="1" height="6"/><rect x="16" y="0" width="1" height="6"/><rect x="18" y="0" width="1" height="6"/><rect x="20" y="0" width="1" height="6"/><rect x="22" y="0" width="1" height="6"/></g></svg>
<svg style="left:980px;top:636px" width="16" height="13"><path d="M7 1H12L15 4V12H7Z" fill="#dcdcdc"/><path d="M12 1V4H15" fill="#9a9a9a"/><path d="M1 8H7M4 5V11" stroke="#dcdcdc" stroke-width="2"/></svg>
<svg style="left:1013px;top:636px" width="14" height="12"><path d="M0 3H4L5 1H9L10 3H14V12H0Z" fill="#dcdcdc"/><circle cx="7" cy="7" r="2.8" fill="#333"/><circle cx="7" cy="7" r="1.5" fill="#dcdcdc"/></svg>
<svg style="left:1043px;top:635px" width="12" height="15"><g fill="none" stroke="#dcdcdc" stroke-width="1.4"><path d="M1 3H11M4 3V1.5H8V3M2 3.5L3 14H9L10 3.5"/><path d="M4.5 6V12M6 6V12M7.5 6V12" stroke-width="1"/></g></svg>
<div class="a" style="left:1082px;top:68px;width:3px;height:728px;background:#262626;"></div>
<div class="a" style="left:1085px;top:68px;width:36px;height:13px;background:#282828;"></div>
<svg style="left:1106px;top:71px" width="10" height="7"><path d="M0 3.5L4 0.5V6.5ZM5 3.5L9 0.5V6.5Z" fill="#bdbdbd"/></svg>
<div class="a" style="left:1085px;top:81px;width:36px;height:67px;background:#323232;"></div>
<div class="a" style="left:1085px;top:148px;width:36px;height:1px;background:#262626;"></div>
<div class="a" style="left:1085px;top:149px;width:36px;height:70px;background:#323232;"></div>
<div class="a" style="left:1085px;top:219px;width:36px;height:1px;background:#262626;"></div>
<div class="a" style="left:1085px;top:220px;width:36px;height:70px;background:#323232;"></div>
<div class="a" style="left:1085px;top:290px;width:36px;height:1px;background:#262626;"></div>
<div class="a" style="left:1085px;top:291px;width:36px;height:505px;background:#313131;"></div>
<div class="a" style="left:1121px;top:68px;width:3px;height:728px;background:#262626;"></div>
<svg style="left:1094px;top:84px" width="18" height="4"><g fill="#4a4a4a"><rect x="0.0" y="0" width="1" height="4"/><rect x="2.5" y="0" width="1" height="4"/><rect x="5.0" y="0" width="1" height="4"/><rect x="7.5" y="0" width="1" height="4"/><rect x="10.0" y="0" width="1" height="4"/><rect x="12.5" y="0" width="1" height="4"/><rect x="15.0" y="0" width="1" height="4"/></g></svg>
<svg style="left:1094px;top:154px" width="18" height="4"><g fill="#4a4a4a"><rect x="0.0" y="0" width="1" height="4"/><rect x="2.5" y="0" width="1" height="4"/><rect x="5.0" y="0" width="1" height="4"/><rect x="7.5" y="0" width="1" height="4"/><rect x="10.0" y="0" width="1" height="4"/><rect x="12.5" y="0" width="1" height="4"/><rect x="15.0" y="0" width="1" height="4"/></g></svg>
<svg style="left:1094px;top:224px" width="18" height="4"><g fill="#4a4a4a"><rect x="0.0" y="0" width="1" height="4"/><rect x="2.5" y="0" width="1" height="4"/><rect x="5.0" y="0" width="1" height="4"/><rect x="7.5" y="0" width="1" height="4"/><rect x="10.0" y="0" width="1" height="4"/><rect x="12.5" y="0" width="1" height="4"/><rect x="15.0" y="0" width="1" height="4"/></g></svg>
<svg style="left:1092px;top:95px" width="22" height="18"><g fill="#dcdcdc"><rect x="0" y="0" width="2.5" height="2.5"/><rect x="0" y="4" width="2.5" height="2.5"/><rect x="0" y="8" width="2.5" height="2.5"/><rect x="4" y="0.5" width="6" height="1.3"/><rect x="4" y="4.5" width="6" height="1.3"/><rect x="4" y="8.5" width="6" height="1.3"/><path d="M20 2L12 11L14 13L21 4Z"/><path d="M11 11Q6 12 6 17Q11 17 13 14Z"/></g></svg>
<svg style="left:1093px;top:123px" width="22" height="19"><g fill="#dcdcdc"><path d="M1 4Q5 0 9 3L9 5Q5 8 1 4Z"/><rect x="10" y="3" width="10" height="2"/><rect x="3" y="11" width="10" height="2"/><path d="M13 12L20 7Q22 12 20 17Z"/></g></svg>
<span class="t" style="left:1096px;top:163px;font-size:17px;color:#dcdcdc;">A</span>
<div class="a" style="left:1109px;top:164px;width:1px;height:16px;background:#dcdcdc;"></div>
<span class="t" style="left:1097px;top:191px;font-size:17px;color:#dcdcdc;font-weight:bold">¶</span>
<div class="a" style="left:1089px;top:232px;width:27px;height:21px;background:#1e1e1e;"></div>
<svg style="left:1095px;top:234px" width="18" height="17"><g fill="none" stroke="#dcdcdc" stroke-width="1"><rect x="1" y="1" width="4" height="4"/><rect x="1" y="6.5" width="4" height="4"/></g><rect x="0.5" y="12" width="5" height="4.5" fill="#dcdcdc"/><path d="M9 4H14Q17 5 16 10Q15 14 11 16" fill="none" stroke="#dcdcdc" stroke-width="1.6"/><path d="M8 4L11 1V7Z" fill="#dcdcdc"/></svg>
<svg style="left:1096px;top:262px" width="16" height="17"><path d="M1 1L15 8.5L1 16Z" fill="#dcdcdc"/></svg>
<div class="a" style="left:1124px;top:68px;width:286px;height:728px;background:#2b2b2b;"></div>
<div class="a" style="left:1124px;top:81px;width:283px;height:232px;background:#323232;"></div>
<div class="a" style="left:1124px;top:68px;width:286px;height:13px;background:#282828;"></div>
<svg style="left:1393px;top:71px" width="10" height="7"><path d="M4 3.5L0 0.5V6.5ZM9 3.5L5 0.5V6.5Z" fill="#bdbdbd"/></svg>
<div class="a" style="left:1124px;top:81px;width:283px;height:17px;background:#282828;"></div>
<div class="a" style="left:1127px;top:81px;width:34px;height:17px;background:#323232;"></div>
<span class="t" style="left:1132px;top:86px;font-size:11.5px;color:#e0e0e0;"><i style="width:23.0px">颜色</i></span>
<span class="t" style="left:1168px;top:86px;font-size:11.5px;color:#9a9a9a;"><i style="width:23.0px">色板</i></span>
<svg style="left:1390px;top:85px" width="11" height="9"><g fill="#c4c4c4"><rect y="1" width="11" height="1"/><rect y="3" width="11" height="1"/><rect y="5" width="11" height="1"/><rect y="7" width="11" height="1"/></g></svg>
<div class="a" style="left:1145px;top:119px;width:17px;height:18px;background:#e6f500;border:1px solid #f4f6c8;box-shadow:0 0 0 1px #000"></div>
<div class="a" style="left:1134px;top:109px;width:18px;height:18px;background:#0a0f18;border:1.5px solid #fff;box-shadow:0 0 0 1px #000,0 0 0 2px #7a7a7a"></div>
<div class="a" style="left:1169px;top:104px;width:186px;height:77px;background:linear-gradient(to bottom,rgba(0,0,0,0),#000),linear-gradient(to right,#fff,#0a6cff)"></div>
<svg style="left:1288px;top:167px" width="13" height="13"><circle cx="6.5" cy="6.5" r="5" fill="none" stroke="#fff" stroke-width="1.3"/></svg>
<div class="a" style="left:1372px;top:104px;width:19px;height:77px;background:linear-gradient(to bottom,#ff0a30 0%,#ff0060 6%,#ff00d8 17%,#6000ff 28%,#0010ff 36%,#00e8ff 51%,#00ff50 67%,#b0ff00 78%,#ffe000 86%,#ff2000 100%)"></div>
<svg style="left:1362px;top:129px" width="7" height="9"><path d="M1 0.5L6.5 4.5L1 8.5Z" fill="#e0e0e0"/></svg>
<div class="a" style="left:1124px;top:197px;width:286px;height:5px;background:#2b2b2b;"></div>
<div class="a" style="left:1124px;top:202px;width:283px;height:21px;background:#282828;"></div>
<div class="a" style="left:1241px;top:202px;width:38px;height:21px;background:#323232;"></div>
<span class="t" style="left:1131px;top:209px;font-size:11.5px;color:#9a9a9a;"><i style="width:23.0px">属性</i></span>
<span class="t" style="left:1170px;top:209px;font-size:11.5px;color:#9a9a9a;"><i style="width:23.0px">调整</i></span>
<span class="t" style="left:1209px;top:209px;font-size:11.5px;color:#9a9a9a;"><i style="width:23.0px">样式</i></span>
<span class="t" style="left:1248px;top:209px;font-size:11.5px;color:#e6e6e6;"><i style="width:23.0px">图层</i></span>
<span class="t" style="left:1286px;top:209px;font-size:11.5px;color:#9a9a9a;"><i style="width:23.0px">通道</i></span>
<span class="t" style="left:1325px;top:209px;font-size:11.5px;color:#9a9a9a;"><i style="width:23.0px">路径</i></span>
<svg style="left:1390px;top:209px" width="11" height="9"><g fill="#c4c4c4"><rect y="1" width="11" height="1"/><rect y="3" width="11" height="1"/><rect y="5" width="11" height="1"/><rect y="7" width="11" height="1"/></g></svg>
<div class="a" style="left:1127px;top:231px;width:86px;height:22px;background:#262626;border:1px solid #3b3b3b"></div>
<svg style="left:1134px;top:236px" width="12" height="12"><circle cx="5" cy="5" r="3.6" fill="none" stroke="#e6e6e6" stroke-width="1.8"/><path d="M7.5 7.5L11 11" stroke="#e6e6e6" stroke-width="2"/></svg>
<span class="t" style="left:1149px;top:238px;font-size:12px;color:#e6e6e6;"><i style="width:24.0px">类型</i></span>
<svg style="left:1201px;top:239px" width="9" height="6"><path d="M1 1L4.5 4.5L8 1" stroke="#bdbdbd" stroke-width="1.2" fill="none"/></svg>
<svg style="left:1229px;top:233px" width="140" height="18"><g fill="#dcdcdc"><rect x="0" y="2" width="12" height="10" fill="none" stroke="#dcdcdc" stroke-width="1.3"/><path d="M2 10L5 6L7 8L8 7L10 10Z"/><circle cx="31" cy="7" r="5.5" fill="none" stroke="#dcdcdc" stroke-width="1.3"/><path d="M31 1.5A5.5 5.5 0 0 0 31 12.5Z" transform="rotate(45 31 7)"/><path d="M51 1H62V4H60V3H58V13H60V14H53V13H55V3H53V4H51Z"/><rect x="75" y="2" width="10" height="10" fill="none" stroke="#dcdcdc" stroke-width="1.2"/><rect x="73.5" y="0.5" width="3" height="3"/><rect x="83.5" y="0.5" width="3" height="3"/><rect x="73.5" y="10.5" width="3" height="3"/><rect x="83.5" y="10.5" width="3" height="3"/><path d="M98 1H104L107 4V13H98Z" fill="none" stroke="#dcdcdc" stroke-width="1.2"/><rect x="96" y="7" width="6" height="6"/><rect x="124" y="3" width="9" height="14" rx="4.5" fill="#262626" stroke="#555" stroke-width="1"/><circle cx="128.5" cy="5" r="4.5" fill="#d0d0d0"/></g></svg>
<div class="a" style="left:1124px;top:254px;width:283px;height:1px;background:#2a2a2a;"></div>
<div class="a" style="left:1124px;top:283px;width:283px;height:1px;background:#2a2a2a;"></div>
<div class="a" style="left:1127px;top:260px;width:117px;height:21px;background:#2a2a2a;border:1px solid #363636"></div>
<span class="t" style="left:1136px;top:266px;font-size:12px;color:#777777;"><i style="width:24.0px">正常</i></span>
<svg style="left:1231px;top:268px" width="9" height="6"><path d="M1 1L4.5 4.5L8 1" stroke="#6a6a6a" stroke-width="1.2" fill="none"/></svg>
<span class="t" style="left:1252px;top:266px;font-size:12px;color:#777777;"><i style="width:48.0px">不透明度</i>:</span>
<div class="a" style="left:1309px;top:260px;width:53px;height:21px;background:#2a2a2a;border:1px solid #363636"></div>
<div class="a" style="left:1347px;top:260px;width:1px;height:21px;background:#363636;"></div>
<span class="t" style="left:1312px;top:265px;font-size:11px;color:#6e6e6e;">100%</span>
<svg style="left:1351px;top:268px" width="9" height="6"><path d="M1 1L4.5 4.5L8 1" stroke="#6a6a6a" stroke-width="1.2" fill="none"/></svg>
<span class="t" style="left:1130px;top:294px;font-size:12px;color:#777777;"><i style="width:24.0px">锁定</i>:</span>
<svg style="left:1167px;top:291px" width="110" height="14"><g fill="#8a8a8a"><rect x="0" y="1" width="11" height="11" fill="none" stroke="#8a8a8a" stroke-width="1"/><rect x="2" y="3" width="3" height="3"/><rect x="6" y="6" width="3" height="3"/><rect x="2" y="8" width="3" height="2"/><rect x="7" y="2" width="2" height="3"/><path d="M37 1L30 9L32 11L38 3Z"/><path d="M30 9Q26 10 26 13Q30 13 32 11Z"/><path d="M50 0V13M44 6.5H57" stroke="#8a8a8a" stroke-width="1.4"/><path d="M50 -1L48 2H52ZM50 14L48 11H52ZM43 6.5L46 4.5V8.5ZM58 6.5L55 4.5V8.5Z"/><path d="M66 3H75V12M68 1V10H77" fill="none" stroke="#8a8a8a" stroke-width="1.2"/><rect x="88" y="6" width="10" height="7"/><path d="M90 6V3.5Q93 0 96 3.5V6" fill="none" stroke="#8a8a8a" stroke-width="1.4"/></g></svg>
<span class="t" style="left:1277px;top:294px;font-size:12px;color:#777777;"><i style="width:24.0px">填充</i>:</span>
<div class="a" style="left:1309px;top:288px;width:53px;height:19px;background:#2a2a2a;border:1px solid #363636"></div>
<div class="a" style="left:1347px;top:288px;width:1px;height:19px;background:#363636;"></div>
<span class="t" style="left:1312px;top:292px;font-size:11px;color:#6e6e6e;">100%</span>
<svg style="left:1351px;top:295px" width="9" height="6"><path d="M1 1L4.5 4.5L8 1" stroke="#6a6a6a" stroke-width="1.2" fill="none"/></svg>
<div class="a" style="left:1124px;top:313px;width:266px;height:1px;background:#2a2a2a;"></div>
<div class="a" style="left:1124px;top:314px;width:266px;height:54px;background:#313131;"></div>
<div class="a" style="left:1124px;top:368px;width:266px;height:1px;background:#2a2a2a;"></div>
<div class="a" style="left:1124px;top:369px;width:266px;height:54px;background:#313131;"></div>
<div class="a" style="left:1124px;top:423px;width:266px;height:1px;background:#2a2a2a;"></div>
<div class="a" style="left:1390px;top:314px;width:17px;height:482px;background:#2d2d2d;"></div>
<svg style="left:1132px;top:338px" width="15" height="9"><path d="M0.5 4.5Q7.5 -2.5 14.5 4.5Q7.5 11.5 0.5 4.5Z" fill="#e0e0e0"/><circle cx="7.5" cy="4.5" r="2.6" fill="#323232"/><circle cx="7.5" cy="4.5" r="1.4" fill="#e0e0e0"/></svg>
<svg style="left:1132px;top:393px" width="15" height="9"><path d="M0.5 4.5Q7.5 -2.5 14.5 4.5Q7.5 11.5 0.5 4.5Z" fill="#e0e0e0"/><circle cx="7.5" cy="4.5" r="2.6" fill="#323232"/><circle cx="7.5" cy="4.5" r="1.4" fill="#e0e0e0"/></svg>
<div class="a" style="left:1158px;top:320px;width:80px;height:45px;overflow:hidden;border:1px solid #555"><svg style="left:0;top:0" width="78" height="43"><use href="#photo"/></svg></div>
<div class="a" style="left:1158px;top:375px;width:80px;height:45px;overflow:hidden;border:1px solid #555"><svg style="left:0;top:0" width="78" height="43"><use href="#photo"/></svg></div>
<span class="t" style="left:1248px;top:338px;font-size:12px;color:#e6e6e6;"><i style="width:24.0px">背景</i> <i style="width:24.0px">拷贝</i></span>
<span class="t" style="left:1248px;top:393px;font-size:12px;color:#e6e6e6;"><i style="width:24.0px">背景</i></span>
<svg style="left:1364px;top:390px" width="11" height="13"><path d="M3 5.5V3.5Q5.5 0 8 3.5V5.5" fill="none" stroke="#d6d6d6" stroke-width="1.4"/><rect x="1" y="5.5" width="9" height="7" fill="none" stroke="#d6d6d6" stroke-width="1.3"/><rect x="4.7" y="8" width="1.6" height="2" fill="#d6d6d6"/></svg>
<div class="a" style="left:1407px;top:68px;width:3px;height:728px;background:#262626;"></div>
<svg style="left:0;top:0" width="1410" height="796"><path d="M963.0 323.5 L982.0 325.5 L976.6 335.8 L1030.0 365.5 L980.0 330.3 L972.5 338.5Z" fill="#f03b3b"/><path d="M1165.5 348.0 L1147.5 353.0 L1149.2 356.4 L1073.0 418.5 L1153.1 361.5 L1159.0 363.0Z" fill="#f03b3b"/></svg>
</body></html>
